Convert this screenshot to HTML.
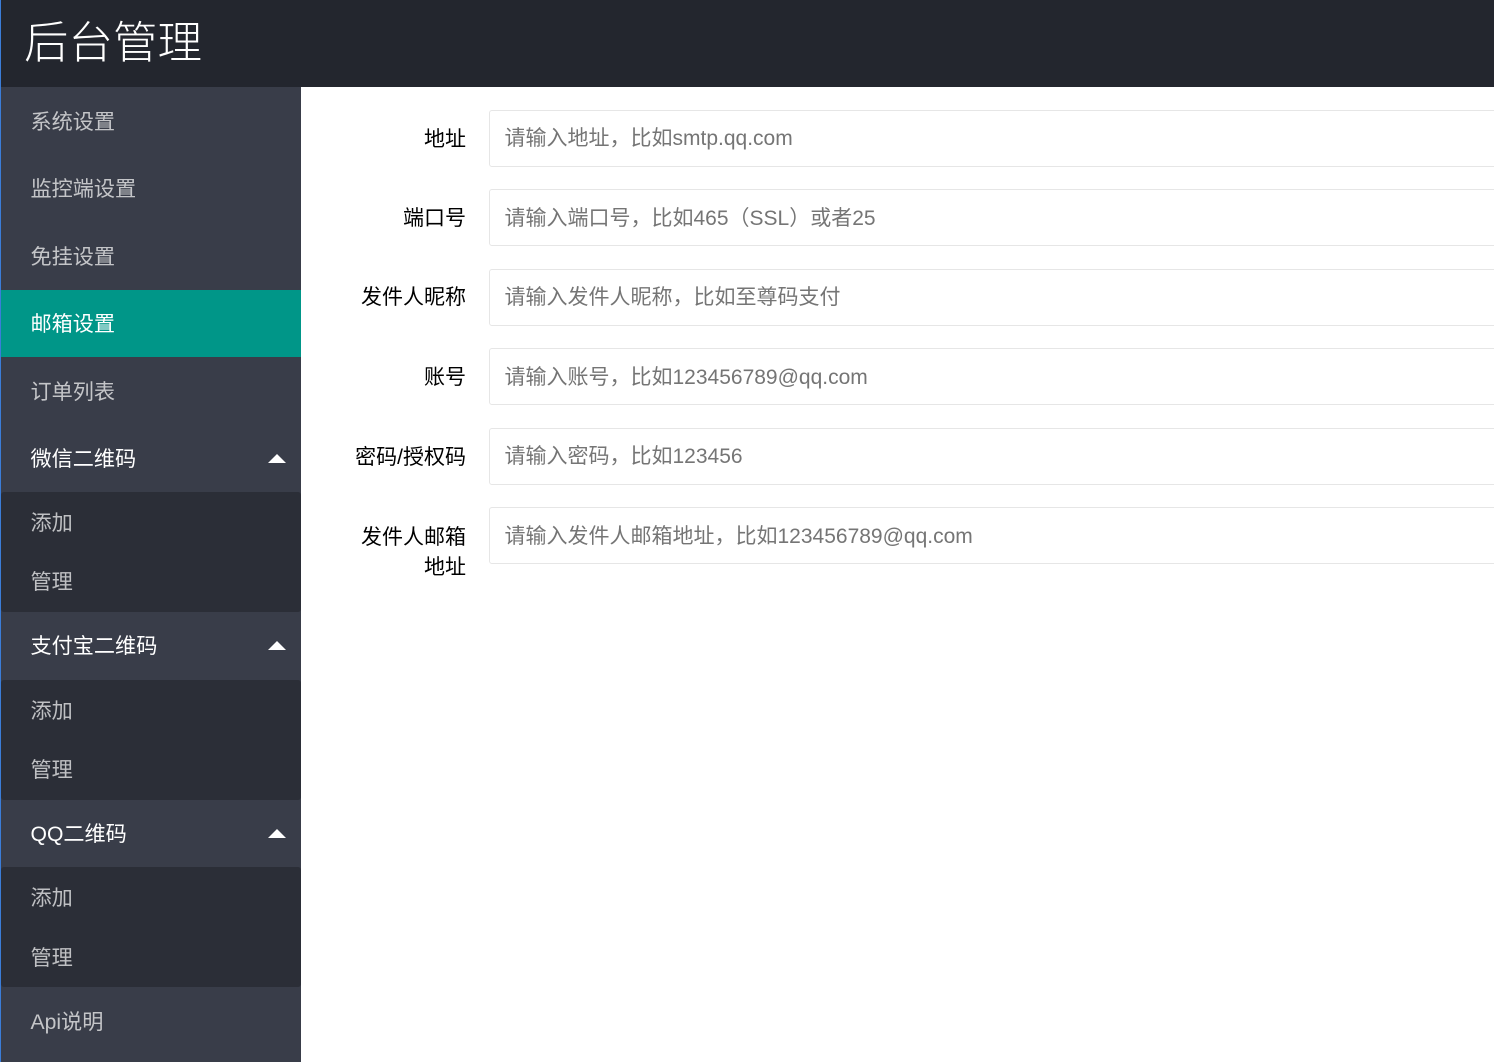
<!DOCTYPE html>
<html lang="zh-CN">
<head>
<meta charset="utf-8">
<title>后台管理</title>
<style>
html,body{margin:0;padding:0;width:1494px;height:1062px;overflow:hidden;background:#fff;font-family:"Liberation Sans","Noto Sans CJK SC",sans-serif}
.a{position:absolute;white-space:nowrap}
#top{left:0;top:0;width:1494px;height:87px;background:#23262e}
#title{left:24px;top:17px;font-size:44.5px;line-height:54px;color:#fff;font-weight:300}
#side{left:0;top:87px;width:301px;height:975px;background:#393d49}
#edge{left:0;top:0;width:1px;height:1062px;background:#3b7dd8;z-index:5}
.n{left:30.5px;font-size:21.15px;line-height:30px;color:rgba(255,255,255,.7)}
.w{color:#fff}
.sub{left:1px;width:300px;height:120px;background:#2b2e37;border-radius:3px}
.act{left:0;top:290px;width:301px;height:67px;background:#009688}
.tri{left:268px;width:0;height:0;border-left:9px solid transparent;border-right:9px solid transparent;border-bottom:9px solid #fff}
.l{right:1028px;font-size:21px;line-height:30px;color:#000;text-align:right}
.i{left:489px;width:1020px;height:57px;box-sizing:border-box;border:1px solid #e6e6e6;border-radius:3px;background:#fff}
.p{left:504.5px;font-size:21px;line-height:30px;color:#757575}
</style>
</head>
<body>
<div class="a" id="top"></div>
<div class="a" id="title">后台管理</div>
<div class="a" id="side"></div>
<div class="a" id="edge"></div>
<div class="a act"></div>
<div class="a sub" style="top:492px"></div>
<div class="a sub" style="top:680px"></div>
<div class="a sub" style="top:867px"></div>

<div class="a n" style="top:108px">系统设置</div>
<div class="a n" style="top:175px">监控端设置</div>
<div class="a n" style="top:243px">免挂设置</div>
<div class="a n w" style="top:310px">邮箱设置</div>
<div class="a n" style="top:378px">订单列表</div>
<div class="a n w" style="top:445px">微信二维码</div>
<div class="a tri" style="top:454px"></div>
<div class="a n" style="top:509px">添加</div>
<div class="a n" style="top:568px">管理</div>
<div class="a n w" style="top:632px">支付宝二维码</div>
<div class="a tri" style="top:641px"></div>
<div class="a n" style="top:697px">添加</div>
<div class="a n" style="top:756px">管理</div>
<div class="a n w" style="top:820px">QQ二维码</div>
<div class="a tri" style="top:829px"></div>
<div class="a n" style="top:884px">添加</div>
<div class="a n" style="top:944px">管理</div>
<div class="a n" style="top:1008px">Api说明</div>

<div class="a l" style="top:125px">地址</div>
<div class="a i" style="top:110px"></div>
<div class="a p" style="top:124px">请输入地址，比如smtp.qq.com</div>

<div class="a l" style="top:204px">端口号</div>
<div class="a i" style="top:189px"></div>
<div class="a p" style="top:204px">请输入端口号，比如465（SSL）或者25</div>

<div class="a l" style="top:283px">发件人昵称</div>
<div class="a i" style="top:269px"></div>
<div class="a p" style="top:283px">请输入发件人昵称，比如至尊码支付</div>

<div class="a l" style="top:363px">账号</div>
<div class="a i" style="top:348px"></div>
<div class="a p" style="top:363px">请输入账号，比如123456789@qq.com</div>

<div class="a l" style="top:443px">密码/授权码</div>
<div class="a i" style="top:428px"></div>
<div class="a p" style="top:442px">请输入密码，比如123456</div>

<div class="a l" style="top:523px">发件人邮箱</div>
<div class="a l" style="top:553px">地址</div>
<div class="a i" style="top:507px"></div>
<div class="a p" style="top:522px">请输入发件人邮箱地址，比如123456789@qq.com</div>
</body>
</html>
